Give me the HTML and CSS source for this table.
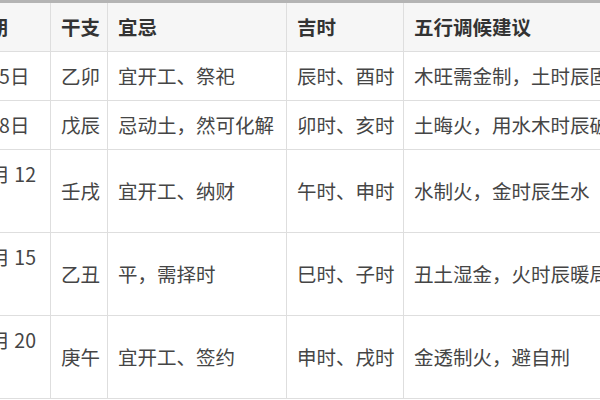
FILE: index.html
```html
<!DOCTYPE html>
<html lang="zh-CN">
<head>
<meta charset="utf-8">
<title>五行调候择日表</title>
<link rel="stylesheet" href="styles.css">
</head>
<body>
<div class="viewport">
  <table class="almanac">
    <colgroup>
      <col class="c-date">
      <col class="c-gz">
      <col class="c-yj">
      <col class="c-js">
      <col class="c-wx">
    </colgroup>
    <thead>
      <tr>
        <th class="date-head">日期</th>
        <th>干支</th>
        <th>宜忌</th>
        <th>吉时</th>
        <th>五行调候建议</th>
      </tr>
    </thead>
    <tbody>
      <tr>
        <td class="date">2025年1月5日</td>
        <td>乙卯</td>
        <td>宜开工、祭祀</td>
        <td>辰时、酉时</td>
        <td>木旺需金制，土时辰固本</td>
      </tr>
      <tr>
        <td class="date">2025年2月8日</td>
        <td>戊辰</td>
        <td>忌动土，然可化解</td>
        <td>卯时、亥时</td>
        <td>土晦火，用水木时辰破局</td>
      </tr>
      <tr>
        <td class="date">2025年10月 12<br>日</td>
        <td>壬戌</td>
        <td>宜开工、纳财</td>
        <td>午时、申时</td>
        <td>水制火，金时辰生水</td>
      </tr>
      <tr>
        <td class="date">2025年11月 15<br>日</td>
        <td>乙丑</td>
        <td>平，需择时</td>
        <td>巳时、子时</td>
        <td>丑土湿金，火时辰暖局</td>
      </tr>
      <tr>
        <td class="date">2025年12月 20<br>日</td>
        <td>庚午</td>
        <td>宜开工、签约</td>
        <td>申时、戌时</td>
        <td>金透制火，避自刑</td>
      </tr>
    </tbody>
  </table>
</div>
</body>
</html>
```

FILE: styles.css
```css
html, body {
  margin: 0;
  padding: 0;
  background: #ffffff;
}

body {
  width: 600px;
  height: 400px;
  overflow: hidden;
  font-family: "Noto Sans CJK SC", "Noto Sans", sans-serif;
}

.viewport {
  width: 600px;
  height: 400px;
  overflow: hidden;
  border-top: 3px solid #b4b4b4;
  box-sizing: border-box;
}

.almanac {
  border-collapse: collapse;
  table-layout: fixed;
  width: 758px;
  margin-left: -95px;
  font-size: 19.5px;
  color: #454545;
}

.c-date { width: 145px; }
.c-gz { width: 57px; }
.c-yj { width: 179px; }
.c-js { width: 117px; }
.c-wx { width: 260px; }

.almanac th,
.almanac td {
  border: 1px solid #dedede;
  padding: 7px 10px;
  line-height: 34px;
  text-align: left;
  vertical-align: middle;
  white-space: nowrap;
  overflow: hidden;
}

.almanac thead th {
  border-top: none;
  background: #f6f6f6;
  color: #333333;
  font-weight: 700;
}

.almanac th.date-head {
  text-align: right;
  padding-right: 42px;
}

.almanac td {
  font-weight: 400;
}

.almanac td.date {
  padding-left: 0;
}
```
